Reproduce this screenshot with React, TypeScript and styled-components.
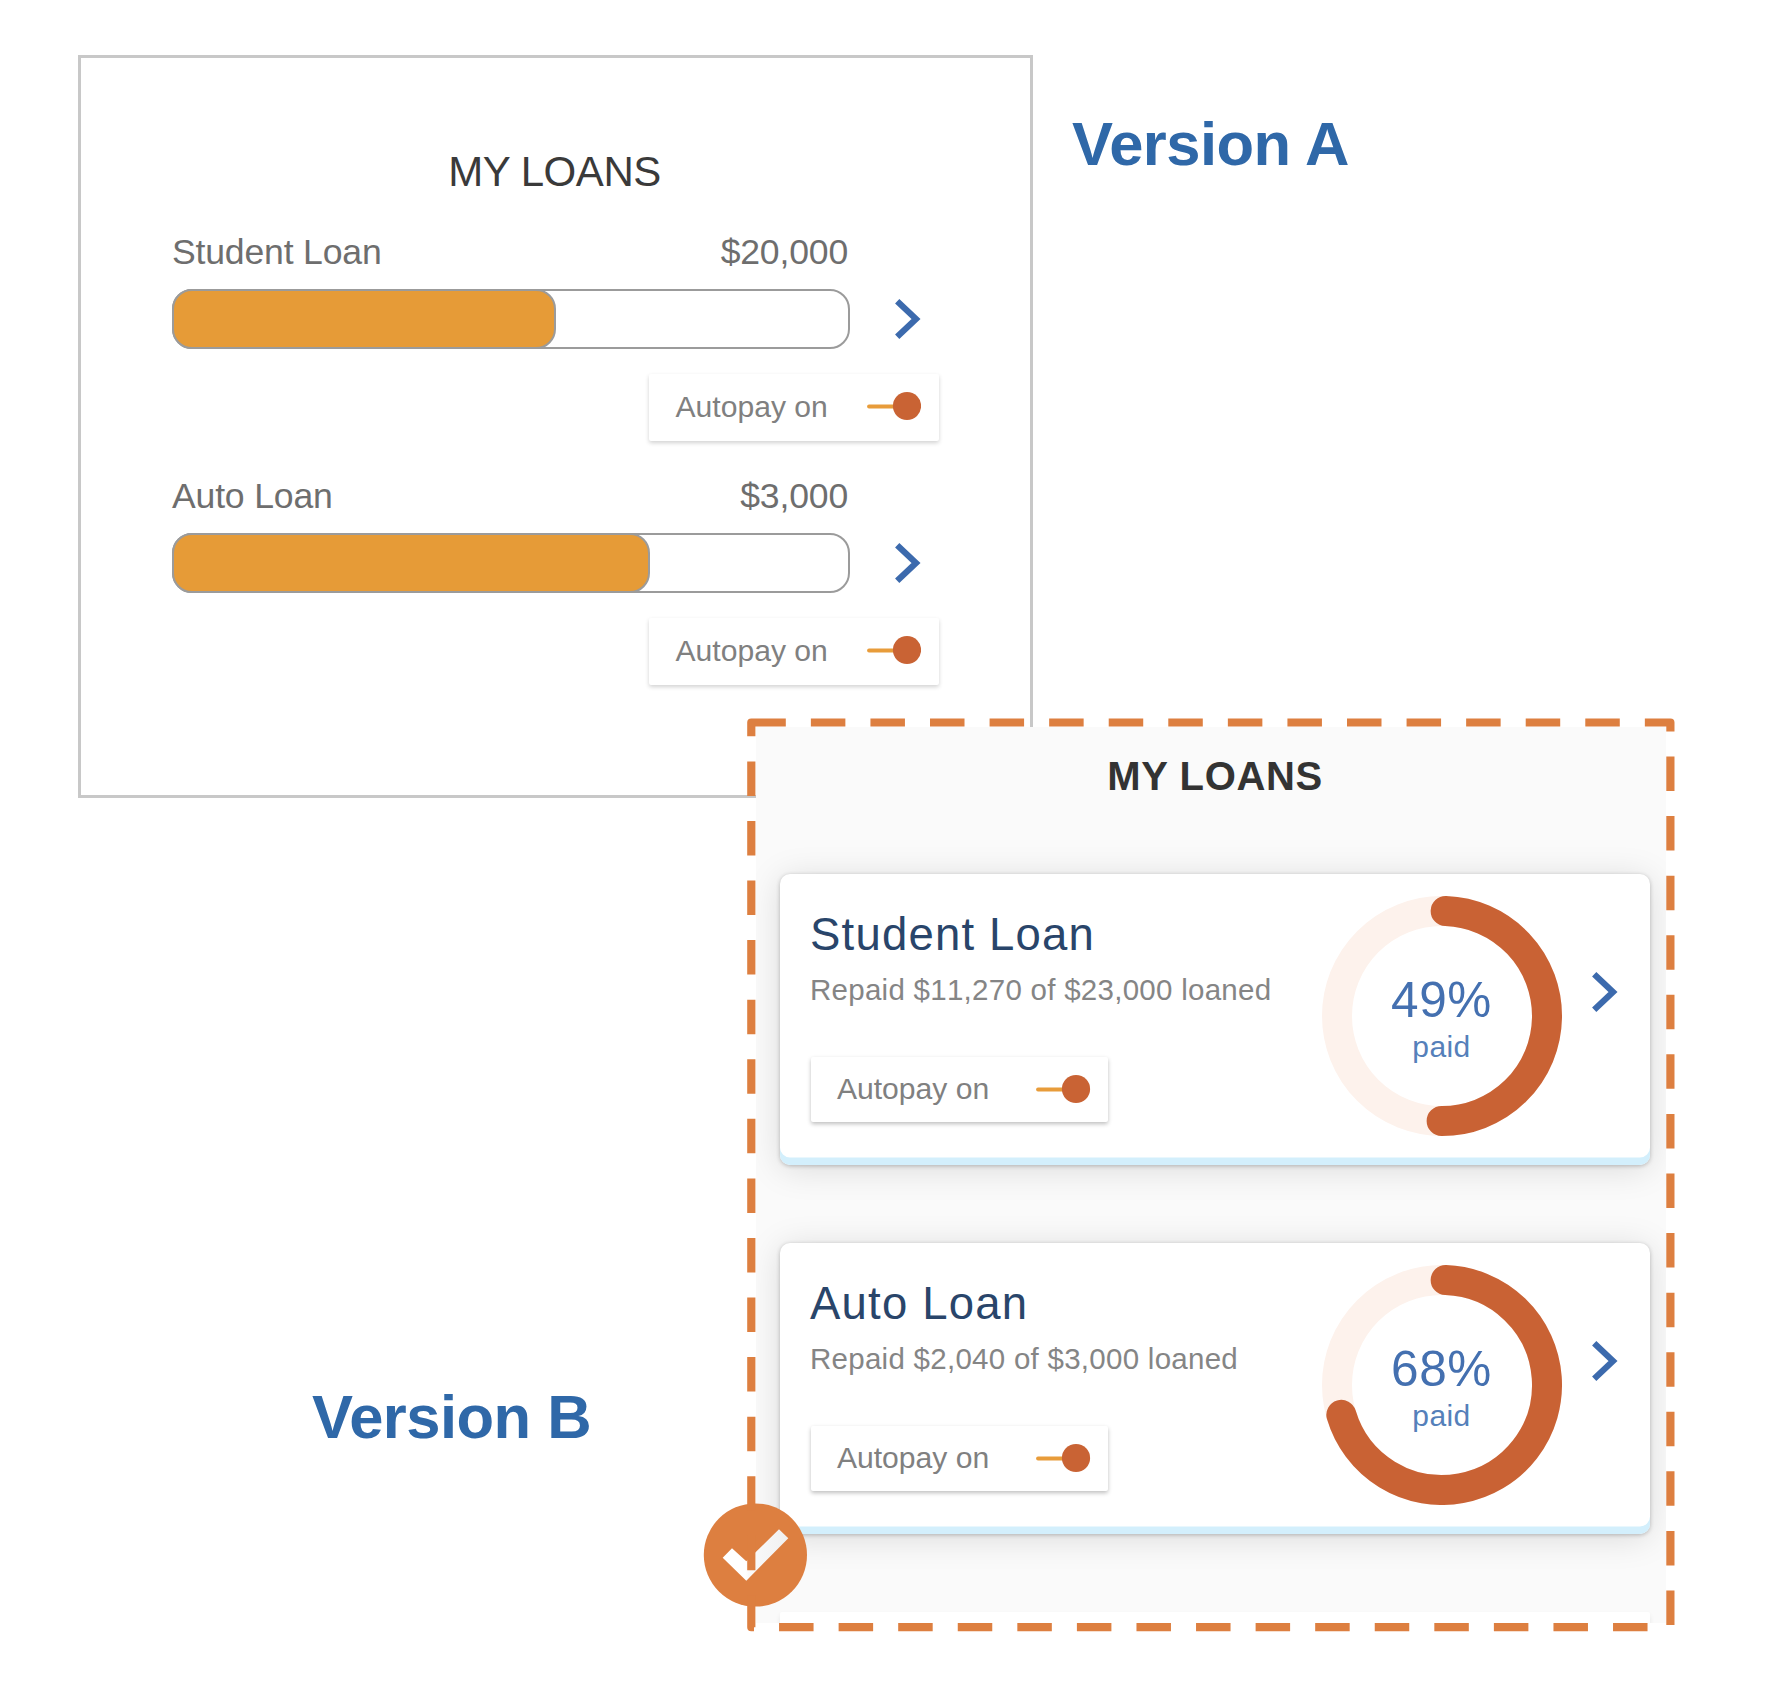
import React from "react";
import styled, { createGlobalStyle } from "styled-components";

const GlobalStyle = createGlobalStyle`
  *, *::before, *::after { box-sizing: border-box; }
  body {
    margin: 0;
    background: #fff;
    font-family: "Liberation Sans", Arial, Helvetica, sans-serif;
  }
`;

const Page = styled.main`
  width: 1779px;
  height: 1695px;
  overflow: hidden;
  background: #ffffff;
  display: flex;
  flex-direction: column;
`;

const VersionARow = styled.section`
  display: flex;
  align-items: flex-start;
  padding: 55px 0 0 78px;
`;

const VersionBRow = styled.section`
  display: flex;
  align-items: flex-start;
  margin-top: -80px;
`;

const VersionLabel = styled.h1<{ $pad: string; $width?: number }>`
  margin: 0;
  padding: ${(p) => p.$pad};
  ${(p) => p.$width && `width: ${p.$width}px;`}
  flex: none;
  font-size: 61.5px;
  font-weight: 700;
  line-height: 70px;
  letter-spacing: -0.5px;
  color: #2f68a8;
  white-space: nowrap;
`;

const PlainPanel = styled.article`
  width: 955px;
  height: 743px;
  flex: none;
  border: 3px solid #c8c8c8;
  padding-top: 89px;
`;

const PlainTitle = styled.h2`
  margin: 0 0 35px;
  padding-right: 2px;
  font-size: 42px;
  font-weight: 400;
  line-height: 50px;
  letter-spacing: -0.45px;
  text-align: center;
  color: #3a3a3a;
`;

const LoanBlock = styled.div`
  display: flex;
  flex-direction: column;
  width: 767px;
  margin: 0 0 35px 91px;
`;

const LoanHeader = styled.div`
  display: flex;
  justify-content: space-between;
  width: 676px;
  font-size: 35.6px;
  line-height: 40px;
  letter-spacing: -0.18px;
  color: #6e6e6e;
`;

const BarRow = styled.div`
  display: flex;
  align-items: center;
  gap: 45px;
  margin: 17px 0 25px;
`;

const BarTrack = styled.div`
  width: 678px;
  height: 60px;
  border: 2px solid #9b9b9b;
  border-radius: 20px;
`;

const BarFill = styled.div<{ $width: number }>`
  width: ${(p) => p.$width}px;
  height: 60px;
  margin: -2px 0 0 -2px;
  background: #e69b37;
  border: 2px solid #9b9b9b;
  border-radius: 20px;
`;

const AutopayBox = styled.div<{ $width: number; $height: number; $strong?: boolean }>`
  display: flex;
  align-items: center;
  justify-content: space-between;
  align-self: ${(p) => (p.$strong ? "flex-start" : "flex-end")};
  width: ${(p) => p.$width}px;
  height: ${(p) => p.$height}px;
  padding: ${(p) => (p.$strong ? "0 17px 1px 25.5px" : "0 18px 3px 26.5px")};
  background: #fff;
  border-radius: 2px;
  box-shadow: 0 2px 4px rgba(0, 0, 0, ${(p) => (p.$strong ? 0.26 : 0.18)});
  font-size: 30.1px;
  line-height: 36px;
  color: #808080;

  > span { padding-top: ${(p) => (p.$strong ? 0 : 1)}px; }
`;

const Icon = styled.svg`
  display: block;
  flex: none;
`;

const FramedPanel = styled.article`
  position: relative;
  width: 928px;
  height: 914px;
  flex: none;
  padding: 9px 8.7px 9px 8.5px;
`;

const PanelBody = styled.div`
  height: 896px;
  overflow: hidden;
  background: #fafafa;
  padding: 25px 16.3px 0 24.5px;
`;

const BoldTitle = styled.h2`
  margin: 0 0 74px;
  font-size: 40px;
  font-weight: 700;
  line-height: 48px;
  letter-spacing: 0.65px;
  text-align: center;
  color: #333333;
`;

const CardList = styled.div`
  display: flex;
  flex-direction: column;
  gap: 78.5px;
`;

const Card = styled.div`
  display: flex;
  align-items: flex-start;
  height: 290.5px;
  flex: none;
  padding-left: 30px;
  background: #fff;
  border-radius: 10px;
  box-shadow:
    inset 0 -7.5px 0 #d3effc,
    0 1px 4px rgba(0, 0, 0, 0.24),
    0 4px 34px rgba(0, 0, 0, 0.13);
`;

const NextCard = styled.div`
  height: 60px;
  flex: none;
  background: #fff;
  border-radius: 2px;
  box-shadow: 0 3px 5px rgba(0, 0, 0, 0.08);
`;

const CardInfo = styled.div`
  display: flex;
  flex-direction: column;
  width: 511.5px;
  padding-top: 33.5px;
`;

const CardTitle = styled.h3`
  margin: 0;
  font-size: 45.5px;
  font-weight: 400;
  line-height: 54px;
  letter-spacing: 1.2px;
  color: #29456a;
`;

const CardNote = styled.p`
  margin: 10px 0 49px 0;
  font-size: 29.5px;
  line-height: 36px;
  letter-spacing: 0.27px;
  font-kerning: none;
  color: #858585;
  white-space: nowrap;
`;

const BoxOffset = styled.div`
  display: flex;
  padding-left: 1.4px;
`;

const Ring = styled.div`
  display: grid;
  width: 240px;
  height: 240px;
  margin-top: 22px;
  > * { grid-area: 1 / 1; }
`;

const RingText = styled.div`
  display: flex;
  flex-direction: column;
  align-items: center;
  gap: 5px;
  padding-top: 79px;
  color: #4470b0;
`;

const Percent = styled.span`
  font-size: 49.5px;
  line-height: 50px;
  letter-spacing: 0.6px;
`;

const Paid = styled.span`
  font-size: 30px;
  line-height: 34px;
  letter-spacing: 0.4px;
  color: #5580ba;
`;

const CardArrow = styled.div`
  margin: 98px 0 0 30.5px;
`;

const Overlay = styled.svg<{ $left: number; $top: number }>`
  position: absolute;
  left: ${(p) => p.$left}px;
  top: ${(p) => p.$top}px;
  display: block;
`;

function Chevron() {
  return (
    <Icon width="26" height="40" viewBox="0 0 26 40">
      <path d="M2.2 2.3 L21 20 L2.2 37.7" fill="none" stroke="#3c6aad" strokeWidth="6.2" />
    </Icon>
  );
}

function Toggle() {
  return (
    <Icon width="54.5" height="30" viewBox="0 0 54.5 30">
      <path d="M2 15.5 H30" stroke="#e89c3a" strokeWidth="3.8" strokeLinecap="round" />
      <circle cx="40" cy="15" r="14.1" fill="#c96334" />
    </Icon>
  );
}

function Autopay({ width, height, strong }: { width: number; height: number; strong?: boolean }) {
  return (
    <AutopayBox $width={width} $height={height} $strong={strong}>
      <span>Autopay on</span>
      <Toggle />
    </AutopayBox>
  );
}

function BarLoan({ name, amount, fill }: { name: string; amount: string; fill: number }) {
  return (
    <LoanBlock>
      <LoanHeader>
        <span>{name}</span>
        <span>{amount}</span>
      </LoanHeader>
      <BarRow>
        <BarTrack>
          <BarFill $width={fill} />
        </BarTrack>
        <Chevron />
      </BarRow>
      <Autopay width={290} height={67} />
    </LoanBlock>
  );
}

function point(angle: number) {
  const a = (angle * Math.PI) / 180;
  return `${120 + 105 * Math.sin(a)} ${120 - 105 * Math.cos(a)}`;
}

function ProgressRing({ percent, end }: { percent: number; end: number }) {
  return (
    <Ring>
      <Icon width="240" height="240" viewBox="0 0 240 240">
        <circle cx="120" cy="120" r="105" fill="none" stroke="#fdf2ec" strokeWidth="30" />
        <path
          d={`M${point(2)} A105 105 0 ${end > 182 ? 1 : 0} 1 ${point(end)}`}
          fill="none"
          stroke="#c96234"
          strokeWidth="30"
          strokeLinecap="round"
        />
      </Icon>
      <RingText>
        <Percent>{percent}%</Percent>
        <Paid>paid</Paid>
      </RingText>
    </Ring>
  );
}

function RingLoan({ name, note, percent, end }: { name: string; note: string; percent: number; end: number }) {
  return (
    <Card>
      <CardInfo>
        <CardTitle>{name}</CardTitle>
        <CardNote>{note}</CardNote>
        <BoxOffset>
          <Autopay width={296.5} height={65} strong />
        </BoxOffset>
      </CardInfo>
      <ProgressRing percent={percent} end={end} />
      <CardArrow>
        <Chevron />
      </CardArrow>
    </Card>
  );
}

export default function App() {
  return (
    <>
      <GlobalStyle />
      <Page>
        <VersionARow>
          <PlainPanel>
            <PlainTitle>MY LOANS</PlainTitle>
            <BarLoan name="Student Loan" amount="$20,000" fill={384} />
            <BarLoan name="Auto Loan" amount="$3,000" fill={478} />
          </PlainPanel>
          <VersionLabel $pad="54px 0 0 39px">Version A</VersionLabel>
        </VersionARow>
        <VersionBRow>
          <VersionLabel $pad="663.5px 0 0 312px" $width={747}>
            Version B
          </VersionLabel>
          <FramedPanel>
            <PanelBody>
              <BoldTitle>MY LOANS</BoldTitle>
              <CardList>
                <RingLoan name="Student Loan" note="Repaid $11,270 of $23,000 loaned" percent={49} end={180.2} />
                <RingLoan name="Auto Loan" note="Repaid $2,040 of $3,000 loaned" percent={68} end={253.5} />
                <NextCard />
              </CardList>
            </PanelBody>
            <Overlay $left={-44} $top={785} width="105" height="105" viewBox="0 0 105 105">
              <defs>
                <linearGradient id="tick" x1="0" x2="1" y1="0" y2="0">
                  <stop offset="0.35" stopColor="#ffffff" />
                  <stop offset="0.4" stopColor="#fafafa" />
                  <stop offset="1" stopColor="#f0f0f0" />
                </linearGradient>
              </defs>
              <circle cx="52.4" cy="52" r="51.6" fill="#dd7f40" />
              <path d="M19.7 54.7 L29 45.3 L43.3 58.3 L76 26.3 L85.3 35.3 L43.3 77.7 Z" fill="url(#tick)" />
            </Overlay>
            <Overlay $left={0} $top={0} width="928" height="914" viewBox="0 0 928 914">
              <rect
                x="4.3"
                y="4.5"
                width="919.1"
                height="904.7"
                fill="none"
                stroke="#dd7f40"
                strokeWidth="8.2"
                strokeLinejoin="round"
                strokeDasharray="34.5 25.07"
              />
            </Overlay>
          </FramedPanel>
        </VersionBRow>
      </Page>
    </>
  );
}
